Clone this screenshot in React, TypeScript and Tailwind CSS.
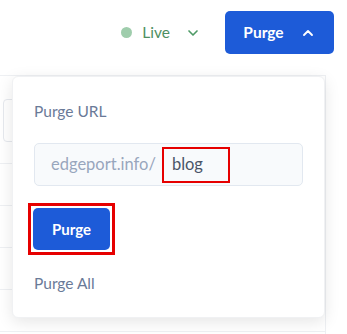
import React from 'react';
import { ChevronDown, ChevronUp } from 'lucide-react';

const rows = [0, 1, 2, 3];

export default function App() {
  return (
    <div className="relative h-[334px] w-[347px] overflow-hidden bg-white font-['Lato','Noto_Sans',sans-serif]">
      {/* top bar */}
      <div className="flex h-[75px] items-start justify-end pr-[13px] pt-[11px]">
        <div className="flex h-[43px] items-center">
          <span className="h-[11px] w-[11px] rounded-full bg-[#9fcdac]" />
          <span className="ml-[10px] text-[15.5px] text-[#4e8f62]">Live</span>
          <ChevronDown size={16} strokeWidth={2.5} className="ml-[15px] text-[#4e9a66]" />
        </div>
        <button className="ml-[24px] flex h-[43px] w-[109px] items-center justify-center gap-[16px] rounded-[5px] bg-[#1d5bd8] text-[15.5px] font-bold text-white">
          <span>Purge</span>
          <ChevronUp size={16} strokeWidth={2.8} />
        </button>
      </div>

      {/* page behind the dropdown */}
      <div className="h-[259px] w-[326px] border-r border-t border-[#eef0f3]">
        <div className="h-[88px] border-b border-[#eef0f3] pl-[3px] pt-[23px]">
          <div className="h-[43px] w-[60px] rounded-[4px] border border-[#e6e9ee]" />
        </div>
        {rows.map(r => (
          <div key={r} className="h-[42px] border-b border-[#eef0f3]" />
        ))}
      </div>
      <div className="h-[1px] w-[277px] bg-[#eef0f3]" />

      {/* dropdown */}
      <div className="absolute left-[12px] top-[76px] flex h-[242px] w-[313px] flex-col rounded-[6px] border border-[#f0f1f3] bg-white pl-[21px] pt-[22px] shadow-[0_4px_16px_rgba(0,0,0,0.10)]">
        <div className="text-[15.5px] leading-[24px] text-[#6a7a98]">Purge URL</div>
        <div className="mt-[20px] flex h-[43px] w-[269px] items-center rounded-[5px] border border-[#e2e8f0] bg-[#f8fafc] pl-[16px]">
          <span className="text-[16.5px] text-[#98a6bd]">edgeport.info/</span>
          <span className="ml-[6px] flex h-[36px] w-[68px] items-center border-[2.5px] border-[#e60000] pl-[8px] text-[16.5px] text-[#4a5568]">
            blog
          </span>
        </div>
        <div className="ml-[-6px] mt-[17px] w-fit border-[3px] border-[#e60000] p-[2px]">
          <button className="flex h-[42px] w-[77px] items-center justify-center rounded-[5px] bg-[#1d5bd8] text-[15px] font-bold text-white">
            Purge
          </button>
        </div>
        <div className="mt-[16px] text-[15.5px] leading-[24px] text-[#6a7a98]">Purge All</div>
      </div>
    </div>
  );
}
